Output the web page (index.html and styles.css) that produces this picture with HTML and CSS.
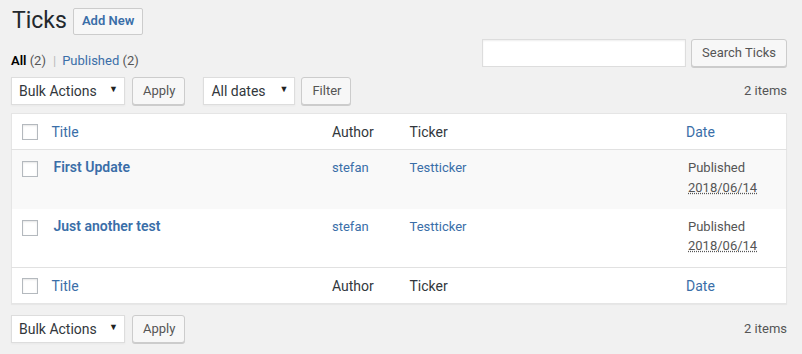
FILE: index.html
```html
<!DOCTYPE html>
<html lang="en">
<head>
    <meta charset="UTF-8">
    <title>Ticks</title>
    <link rel="stylesheet" href="styles.css">
</head>
<body>
    <div class="wrap">
        <div class="page-header">
            <h1>Ticks</h1>
            <a href="#" class="btn btn-title">Add New</a>
        </div>

        <div class="filter-bar">
            <ul class="subsubsub">
                <li><a href="#" class="current">All <span class="count">(2)</span></a><span class="sep">|</span></li>
                <li><a href="#">Published <span class="count">(2)</span></a></li>
            </ul>
            <div class="search-box">
                <input type="search" class="search-input">
                <button class="btn btn-search">Search Ticks</button>
            </div>
        </div>

        <div class="tablenav">
            <div class="actions">
                <div class="select select-bulk">Bulk Actions <span class="arrow">▼</span></div>
                <button class="btn">Apply</button>
            </div>
            <div class="actions">
                <div class="select select-dates">All dates <span class="arrow">▼</span></div>
                <button class="btn">Filter</button>
            </div>
            <div class="num-items">2 items</div>
        </div>

        <table class="list-table">
            <colgroup>
                <col class="col-check">
                <col>
                <col class="col-author">
                <col>
                <col class="col-date">
            </colgroup>
            <thead>
                <tr>
                    <td class="check-column"><span class="checkbox"></span></td>
                    <th class="sortable"><a href="#">Title</a></th>
                    <th>Author</th>
                    <th>Ticker</th>
                    <th class="sortable"><a href="#">Date</a></th>
                </tr>
            </thead>
            <tbody>
                <tr class="alt">
                    <td class="check-column"><span class="checkbox"></span></td>
                    <td><a href="#" class="row-title">First Update</a></td>
                    <td><a href="#">stefan</a></td>
                    <td><a href="#">Testticker</a></td>
                    <td>Published<br><abbr title="2018/06/14">2018/06/14</abbr></td>
                </tr>
                <tr>
                    <td class="check-column"><span class="checkbox"></span></td>
                    <td><a href="#" class="row-title">Just another test</a></td>
                    <td><a href="#">stefan</a></td>
                    <td><a href="#">Testticker</a></td>
                    <td>Published<br><abbr title="2018/06/14">2018/06/14</abbr></td>
                </tr>
            </tbody>
            <tfoot>
                <tr>
                    <td class="check-column"><span class="checkbox"></span></td>
                    <th class="sortable"><a href="#">Title</a></th>
                    <th>Author</th>
                    <th>Ticker</th>
                    <th class="sortable"><a href="#">Date</a></th>
                </tr>
            </tfoot>
        </table>

        <div class="tablenav tablenav-bottom">
            <div class="actions">
                <div class="select select-bulk">Bulk Actions <span class="arrow">▼</span></div>
                <button class="btn">Apply</button>
            </div>
            <div class="num-items">2 items</div>
        </div>
    </div>
</body>
</html>
```

FILE: styles.css
```css
/* Base */
:root {
    --link: #3a6ea8;
    --text: #444;
    --text-dark: #23282d;
    --muted: #555;
    --bg: #f1f1f1;
    --border: #e5e5e5;
    --border-btn: #ccc;
}

* {
    margin: 0;
    padding: 0;
    box-sizing: border-box;
}

body {
    font-family: Roboto, "Liberation Sans", sans-serif;
    font-size: 13px;
    line-height: 1.5;
    color: var(--text);
    background: var(--bg);
}

a {
    color: var(--link);
    text-decoration: none;
}

.wrap {
    margin: 0 15px 0 11px;
}

/* Buttons */
.btn {
    display: inline-flex;
    align-items: center;
    height: 28px;
    padding: 0 9px 1px 10px;
    font-family: inherit;
    font-size: 13px;
    color: var(--muted);
    background: #f7f7f7;
    border: 1px solid var(--border-btn);
    border-radius: 3px;
    box-shadow: 0 1px 0 #ccc;
    cursor: pointer;
}

.btn-search {
    padding-right: 10px;
}

/* Header */
.page-header {
    display: flex;
    align-items: center;
    padding-top: 7px;
    margin-bottom: 4px;
}

.page-header h1 {
    font-size: 23px;
    font-weight: 400;
    line-height: 28px;
    color: var(--text-dark);
    margin-left: 1px;
}

.btn-title {
    margin-left: 6px;
    height: 27px;
    padding: 0 8px;
    font-weight: 600;
    color: var(--link);
    border-radius: 2px;
    box-shadow: none;
}

/* Status links + search */
.filter-bar {
    display: flex;
    justify-content: space-between;
    align-items: flex-start;
    height: 38px;
}

.subsubsub {
    list-style: none;
    display: flex;
    margin-top: 9px;
    line-height: 26px;
    color: #666;
}

.subsubsub a.current {
    color: #000;
    font-weight: 600;
}

.subsubsub .count {
    color: var(--muted);
    font-weight: 400;
}

.subsubsub .sep {
    color: #bbb;
    margin: 0 6px 0 7px;
}

.search-box {
    display: flex;
    gap: 5px;
}

.search-input {
    width: 204px;
    height: 28px;
    border: 1px solid #ddd;
    background: #fff;
    box-shadow: inset 0 1px 2px rgba(0,0,0,0.07);
}

/* Table nav */
.tablenav {
    display: flex;
    align-items: center;
    height: 28px;
    margin-bottom: 8px;
}

.tablenav .actions {
    display: flex;
    gap: 7px;
    margin-right: 18px;
}

.tablenav .actions + .actions {
    gap: 6px;
}

.select {
    display: flex;
    align-items: center;
    justify-content: space-between;
    height: 28px;
    padding: 0 6px 0 7px;
    font-size: 14px;
    color: #32373c;
    background: #fff;
    border: 1px solid #ddd;
    box-shadow: 0 1px 2px rgba(0,0,0,0.04);
}

.select .arrow {
    font-size: 9px;
    color: #222;
    margin-bottom: 2px;
}

.select-bulk {
    width: 114px;
}

.select-dates {
    width: 92px;
    padding-right: 6px;
}

.num-items {
    margin-left: auto;
    color: var(--muted);
}

.tablenav-bottom {
    margin-top: 11px;
}

/* List table */
.list-table {
    width: 100%;
    table-layout: fixed;
    border-collapse: collapse;
    background: #fff;
    border: 1px solid var(--border);
    box-shadow: 0 1px 1px rgba(0,0,0,0.04);
}

.col-check {
    width: 32px;
}

.col-author {
    width: 10%;
}

.col-date {
    width: 14%;
}

.list-table th,
.list-table td {
    text-align: left;
    vertical-align: top;
    font-weight: 400;
}

.list-table thead th,
.list-table tfoot th {
    height: 35px;
    padding: 8px 10px 7px;
    font-size: 14px;
    line-height: 20px;
    color: #32373c;
}

.list-table th.sortable {
    padding-left: 8px;
}

.list-table thead tr {
    border-bottom: 1px solid #e1e1e1;
}

.list-table tfoot tr {
    border-top: 1px solid #e1e1e1;
}

.list-table tbody td {
    height: 59px;
    padding: 8px 10px 7px;
    line-height: 19.5px;
    color: var(--muted);
}

.list-table tbody tr.alt {
    background: #f9f9f9;
}

.list-table .check-column {
    padding: 10px 0 0 10px;
}

.list-table tbody .check-column {
    padding-top: 11px;
}

.checkbox {
    display: block;
    width: 16px;
    height: 16px;
    background: #fff;
    border: 1px solid #b4b9be;
    box-shadow: inset 0 1px 2px rgba(0,0,0,0.1);
}

.row-title {
    font-size: 14px;
    font-weight: 600;
}

abbr {
    text-decoration: underline dotted;
}
```
